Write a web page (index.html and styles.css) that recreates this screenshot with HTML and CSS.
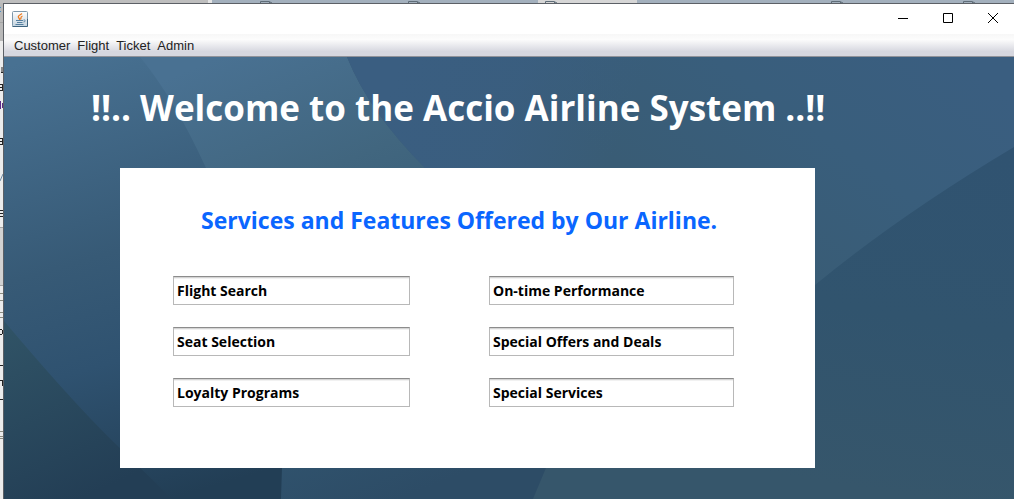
FILE: index.html
```html
<!DOCTYPE html>
<html lang="en">
<head>
<meta charset="utf-8">
<title>Accio Airline System</title>
<link rel="stylesheet" href="styles.css">
</head>
<body>
<div class="desktop">
  <svg class="desktop-tabs" viewBox="0 0 1014 3" preserveAspectRatio="none" aria-hidden="true">
    <rect width="1014" height="3" fill="#a3b0bd"/>
    <rect width="208" height="3" fill="#bebebe"/>
    <rect x="208" width="4" height="3" fill="#e4e4e4"/>
    <rect x="538" width="99" height="3" fill="#d6d6d6"/>
    <path d="M260.500 3V1.500H269.500V3M270 2L272 3M408.500 3V1.500H417.500V3M418 2L420 3M545.500 3V1.500H554.500V3M555 2L557 3M831.500 3V1.500H840.500V3M841 2L843 3M963.500 3V1.500H972.500V3M973 2L975 3" fill="none" stroke="#5f6d78"/>
  </svg>
  <div class="workspace">
    <svg class="editor-edge" viewBox="0 3 3 496" preserveAspectRatio="xMinYMin slice" aria-hidden="true">
      <rect y="3" width="3" height="496" fill="#ececec"/>
      <rect y="3" width="3" height="38" fill="#b9b9b9"/>
      <rect y="228" width="3" height="57" fill="#d2d2d2"/>
      <path d="M0 227.500H3M0 285.500H3M0 22.500H3" stroke="#a5a5a5"/>
      <path d="M0 7.500H1M0 11.500H1" stroke="#4a90c8"/>
      <path d="M2 67V73M1 72.500H3M0 84.500H2M0 87.500H3M0 90.500H3M2.500 84V91M0 138.500H2M0 141.500H3M0 144.500H3M2.500 138V145M0 210.500H3M0 213.500H3M0 216.500H3M0 329.500H2M0 334.500H2M2.500 330V334M0 365.500H3M0 380.500H2M2.500 380V386M0 399.500H3" fill="none" stroke="#222"/>
      <path d="M.5 101V109M2.500 103V108" stroke="#5b2a86"/>
      <path d="M0 181L3 174" stroke="#6d8ba5"/>
      <path d="M0 293.500H3M0 300.500H3M0 312.500H3M0 317.500H3M0 431.500H3M0 436.500H3M0 438.500H3" stroke="#8b8b80"/>
    </svg>
    <div class="window">
      <header class="titlebar">
        <svg class="app-icon" viewBox="0 0 16 16" role="img" aria-label="Java">
          <defs><linearGradient id="cup" x2="0" y2="1"><stop stop-color="#fff"/><stop offset="1" stop-color="#c3d3df"/></linearGradient></defs>
          <rect x=".5" y=".5" width="15" height="15" rx="1" fill="url(#cup)" stroke="#7e98ab"/>
          <path d="M.5 15.500H15.500V8" fill="none" stroke="#3f647f"/>
          <path d="M10 2.500C8 4 5.500 5 6.500 6.500C7 7.500 8 7.500 7.500 9M10.500 5C8 6 9.500 7 8.500 8.500" fill="none" stroke="#ee7d22" stroke-width="1.300"/>
          <path d="M4 9.500H11M5 11.500H10.500M11.500 9C14 8.500 13.500 11 11.500 11M3.500 13.500H11.500" fill="none" stroke="#557f9f"/>
        </svg>
        <div class="window-controls">
          <button type="button" aria-label="Minimize"><svg viewBox="0 0 12 12"><path d="M1 5.500H11"/></svg></button>
          <button type="button" aria-label="Maximize"><svg viewBox="0 0 12 12"><path d="M.5 .5H9.500V9.500H.5Z"/></svg></button>
          <button type="button" aria-label="Close"><svg viewBox="0 0 12 12"><path d="M1 0L11 10M11 0L1 10"/></svg></button>
        </div>
      </header>
      <nav class="menubar" aria-label="Main menu">
        <button type="button">Customer</button>
        <button type="button">Flight</button>
        <button type="button">Ticket</button>
        <button type="button">Admin</button>
      </nav>
      <main class="content">
        <svg class="backdrop" viewBox="4 57 1010 442" preserveAspectRatio="none" aria-hidden="true">
          <defs>
            <linearGradient id="west" gradientUnits="userSpaceOnUse" x1="40" y1="57" x2="170" y2="499"><stop stop-color="#487192"/><stop offset=".45" stop-color="#375a76"/><stop offset=".68" stop-color="#2f5270"/><stop offset="1" stop-color="#223e55"/></linearGradient>
            <linearGradient id="wedge" gradientUnits="userSpaceOnUse" x1="4" y1="330" x2="80" y2="499"><stop stop-color="#305366"/><stop offset="1" stop-color="#233e55"/></linearGradient>
            <linearGradient id="middle" gradientUnits="userSpaceOnUse" x1="220" y1="57" x2="400" y2="499"><stop stop-color="#497192"/><stop offset=".3" stop-color="#41667f"/><stop offset=".75" stop-color="#315570"/><stop offset="1" stop-color="#2d4c66"/></linearGradient>
            <linearGradient id="sky" gradientUnits="userSpaceOnUse" x1="960" y1="60" x2="800" y2="290"><stop stop-color="#3a5e80"/><stop offset=".5" stop-color="#395e7c"/><stop offset="1" stop-color="#395c75"/></linearGradient>
            <linearGradient id="haze" gradientUnits="userSpaceOnUse" x1="400" y1="57" x2="620" y2="140"><stop stop-color="#3a5e81"/><stop offset=".5" stop-color="#3a5e81" stop-opacity=".8"/><stop offset="1" stop-color="#3a5e81" stop-opacity="0"/></linearGradient>
            <linearGradient id="east" gradientUnits="userSpaceOnUse" x1="980" y1="150" x2="920" y2="499"><stop stop-color="#305371"/><stop offset=".5" stop-color="#31546e"/><stop offset="1" stop-color="#36566b"/></linearGradient>
          </defs>
          <rect x="4" y="57" width="1010" height="442" fill="url(#west)"/>
          <path d="M4 321Q80 411 123 451L172 499H4Z" fill="url(#wedge)"/>
          <path d="M140 57Q174 98 206 168Q280 330 282 468L281 499H620V57Z" fill="url(#middle)"/>
          <path d="M347 57Q369 112 425 168Q490 240 620 320V499H1014V57Z" fill="url(#sky)"/>
          <path d="M347 57Q369 112 425 168H700V57Z" fill="url(#haze)"/>
          <path d="M1014 147Q900 215 815 285Q640 400 546 468L533 499H1014Z" fill="url(#east)"/>
        </svg>
        <div class="page">
          <h1>!!.. Welcome to the Accio Airline System ..!!</h1>
          <section class="services">
            <h2>Services and Features Offered by Our Airline.</h2>
            <div class="fields">
              <input type="text" aria-label="Service 1" value="Flight Search">
              <input type="text" aria-label="Feature 1" value="On-time Performance">
              <input type="text" aria-label="Service 2" value="Seat Selection">
              <input type="text" aria-label="Feature 2" value="Special Offers and Deals">
              <input type="text" aria-label="Service 3" value="Loyalty Programs">
              <input type="text" aria-label="Feature 3" value="Special Services">
            </div>
          </section>
        </div>
      </main>
    </div>
  </div>
</div>
</body>
</html>
```
FILE: styles.css
```css
* { box-sizing: border-box; }
body { margin: 0; font-family: "Open Sans", "Noto Sans", sans-serif; }
button { border: 0; padding: 0; background: none; color: inherit; font: inherit; }
.desktop { display: flex; flex-direction: column; height: 100vh; overflow: hidden; }
.desktop-tabs { display: block; width: 100%; height: 3px; flex: none; }
.workspace { display: flex; flex: 1; min-height: 0; }
.editor-edge { width: 3px; height: 100%; flex: none; }
.window {
  display: flex; flex-direction: column; flex: 1; min-width: 0;
  border-top: 1px solid #5c6066; border-left: 1px solid #5c6066; background: #fff;
}
.titlebar { display: flex; align-items: center; justify-content: space-between; height: 30px; padding-left: 8px; flex: none; }
.app-icon { width: 16px; height: 16px; }
.window-controls { display: flex; }
.window-controls button { display: grid; place-items: center; width: 46px; height: 30px; }
.window-controls button:last-child { width: 42px; }
.window-controls svg { width: 12px; height: 12px; fill: none; stroke: #000; }
.menubar {
  display: flex; align-items: center; gap: 7px; height: 23px; padding: 2px 10px 0; flex: none;
  border-bottom: 1px solid #909299;
  background: linear-gradient(#f7f7f7, #fcfcfc 25%, #d6d7df 80%, #d6d7df);
  font: 13px/16px "Liberation Sans", Arial, sans-serif; color: #222;
}
.content { position: relative; flex: 1; min-height: 0; }
.backdrop { position: absolute; inset: 0; width: 100%; height: 100%; }
.page { position: relative; padding: 23px 199px 31px 116px; }
h1 {
  margin: 0 0 33px -29px; color: #fff;
  font-size: 35px; line-height: 55px; font-weight: 700; white-space: nowrap;
}
.services { padding: 33px 81px 61px 53px; background: #fff; }
h2 {
  margin: 0 0 37px; padding-left: 28px; color: #0a66ff;
  font-size: 23px; line-height: 38px; font-weight: 700; white-space: nowrap;
}
.fields { display: grid; grid-template-columns: 237fr 245fr; gap: 22px 79px; }
.fields input {
  width: 100%; min-width: 0; height: 29px; padding: 0 3px;
  border: 1px solid #b8b8b8; border-top-color: #8c8c8c; border-radius: 0; outline: 0;
  background: #fff; box-shadow: inset 0 1px #d4d4d4, inset 0 2px #f1f1f1;
  color: #000; font: 700 14px/20px "Open Sans", "Noto Sans", sans-serif;
}
```
